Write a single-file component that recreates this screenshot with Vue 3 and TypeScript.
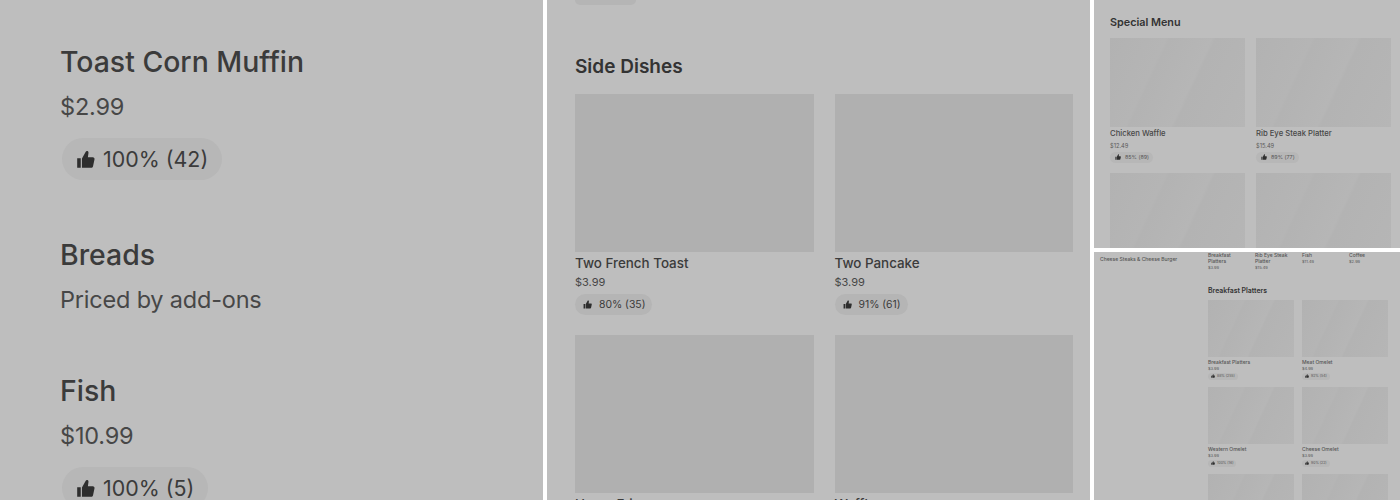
<script setup lang="ts">
interface Dish {
  name: string
  price: string
  rating?: string
}

const leftList: Dish[] = [
  { name: 'Toast Corn Muffin', price: '$2.99', rating: '100% (42)' },
  { name: 'Breads', price: 'Priced by add-ons' },
  { name: 'Fish', price: '$10.99', rating: '100% (5)' },
]

const sideDishes: Dish[] = [
  { name: 'Two French Toast', price: '$3.99', rating: '80% (35)' },
  { name: 'Two Pancake', price: '$3.99', rating: '91% (61)' },
  { name: 'Home Fries', price: '$3.99' },
  { name: 'Waffle', price: '$3.99' },
]

const specials: Dish[] = [
  { name: 'Chicken Waffle', price: '$12.49', rating: '85% (89)' },
  { name: 'Rib Eye Steak Platter', price: '$15.49', rating: '89% (77)' },
  { name: 'Fish Platter', price: '$11.49' },
  { name: 'Steak Platter', price: '$13.49' },
]

const topRow: Dish[] = [
  { name: 'Breakfast Platters', price: '$3.99' },
  { name: 'Rib Eye Steak Platter', price: '$15.49' },
  { name: 'Fish', price: '$11.49' },
  { name: 'Coffee', price: '$2.99' },
]

const platters: Dish[] = [
  { name: 'Breakfast Platters', price: '$3.99', rating: '88% (255)' },
  { name: 'Meat Omelet', price: '$4.99', rating: '92% (54)' },
  { name: 'Western Omelet', price: '$3.99', rating: '100% (16)' },
  { name: 'Cheese Omelet', price: '$3.99', rating: '90% (22)' },
  { name: 'Ham Omelet', price: '$3.99' },
  { name: 'Veggie Omelet', price: '$3.99' },
]

const thumbPath =
  'M1 7h3v8H1zM5 7.2 8.2 1.4c.3-.6 1-.8 1.5-.5.6.3.9.9.8 1.6L10 6h4.2c.9 0 1.6.9 1.4 1.8l-1.3 6c-.2.7-.8 1.2-1.5 1.2H5z'
</script>

<template>
  <div class="collage">
    <section class="panel panel-list">
      <div v-for="dish in leftList" :key="dish.name" class="list-item">
        <div class="name">{{ dish.name }}</div>
        <div class="price">{{ dish.price }}</div>
        <div v-if="dish.rating" class="chip">
          <svg viewBox="0 0 16 16"><path :d="thumbPath" /></svg>
          <span>{{ dish.rating }}</span>
        </div>
      </div>
    </section>

    <section class="panel panel-side">
      <div class="cut-chip"></div>
      <h2>Side Dishes</h2>
      <div class="grid">
        <article v-for="dish in sideDishes" :key="dish.name" class="card">
          <div class="photo"></div>
          <div class="name">{{ dish.name }}</div>
          <div class="price">{{ dish.price }}</div>
          <div v-if="dish.rating" class="chip">
            <svg viewBox="0 0 16 16"><path :d="thumbPath" /></svg>
            <span>{{ dish.rating }}</span>
          </div>
        </article>
      </div>
    </section>

    <div class="stack">
      <section class="panel panel-special">
        <h2>Special Menu</h2>
        <div class="grid">
          <article v-for="dish in specials" :key="dish.name" class="card">
            <div class="photo streak"></div>
            <div class="name">{{ dish.name }}</div>
            <div class="price">{{ dish.price }}</div>
            <div v-if="dish.rating" class="chip">
              <svg viewBox="0 0 16 16"><path :d="thumbPath" /></svg>
              <span>{{ dish.rating }}</span>
            </div>
          </article>
        </div>
      </section>

      <section class="panel panel-page">
        <aside class="sidebar">Cheese Steaks &amp; Cheese Burger</aside>
        <div class="page-main">
          <div class="top-row">
            <div v-for="dish in topRow" :key="dish.name" class="top-item">
              <div class="top-name">{{ dish.name }}</div>
              <div class="top-price">{{ dish.price }}</div>
            </div>
          </div>
          <h2>Breakfast Platters</h2>
          <div class="grid">
            <article v-for="dish in platters" :key="dish.name" class="card">
              <div class="photo streak"></div>
              <div class="name">{{ dish.name }}</div>
              <div class="price">{{ dish.price }}</div>
              <div v-if="dish.rating" class="chip">
                <svg viewBox="0 0 16 16"><path :d="thumbPath" /></svg>
                <span>{{ dish.rating }}</span>
              </div>
            </article>
          </div>
        </div>
      </section>
    </div>
  </div>
</template>

<style scoped>
.collage {
  display: grid;
  grid-template-columns: 543px 543px 306px;
  gap: 4px;
  width: 1400px;
  height: 500px;
  overflow: hidden;
  background: #fff;
  font-family: Inter, "Liberation Sans", sans-serif;
  color: #3b3b3b;
}

.stack {
  display: grid;
  grid-template-rows: 248px 248px;
  gap: 4px;
  height: 500px;
}

.panel {
  height: 100%;
  overflow: hidden;
  background: #bebebe;
  box-sizing: border-box;
}

h2 {
  margin: 0;
  font-weight: 600;
  color: #333;
}

.grid {
  display: grid;
  grid-template-columns: 1fr 1fr;
}

.photo {
  background: #b0b0b0;
}

.streak {
  background: linear-gradient(115deg, #b2b2b2 0%, #b5b5b5 32%, #b3b3b3 34%, #b6b6b6 58%, #b3b3b3 60%, #b6b6b6 100%);
}

.chip {
  display: flex;
  align-items: center;
  width: fit-content;
  background: #b5b5b5;
}

.chip svg {
  display: block;
  fill: #2e2e2e;
}

/* left: zoomed list */
.panel-list {
  padding: 44px 0 0 60px;
}

.list-item {
  height: 193px;
}

.list-item:nth-child(2) {
  height: 136px;
}

.panel-list .name {
  font-size: 28.4px;
  line-height: 36px;
  font-weight: 500;
}

.panel-list .price {
  font-size: 23.5px;
  line-height: 32px;
  margin-top: 11px;
  letter-spacing: -0.2px;
  color: #474747;
}

.panel-list .chip {
  margin: 15px 0 0 2px;
  height: 42px;
  padding: 0 14px;
  gap: 8px;
  border-radius: 21px;
  font-size: 21.4px;
  background: #b7b7b7;
}

.panel-list .chip svg {
  width: 19px;
  height: 19px;
}

/* middle: side dishes */
.panel-side {
  padding-left: 28px;
}

.cut-chip {
  width: 61px;
  height: 5px;
  background: #b5b5b5;
  border-radius: 0 0 10px 10px;
}

.panel-side h2 {
  margin-top: 49px;
  font-size: 19px;
  line-height: 26px;
}

.panel-side .grid {
  margin-top: 14px;
  width: 498px;
  column-gap: 21px;
  row-gap: 20px;
}

.panel-side .photo {
  height: 158px;
}

.panel-side .name {
  margin-top: 2px;
  font-size: 13.4px;
  line-height: 18px;
  font-weight: 500;
}

.panel-side .price {
  margin-top: 3px;
  font-size: 11px;
  line-height: 15px;
  color: #474747;
}

.panel-side .chip {
  margin-top: 4px;
  height: 21px;
  padding: 0 7px 0 8px;
  gap: 7px;
  border-radius: 11px;
  font-size: 10.4px;
}

.panel-side .chip svg {
  width: 9px;
  height: 9px;
}

/* top right: special menu */
.panel-special {
  padding-left: 16px;
}

.panel-special h2 {
  margin-top: 15px;
  font-size: 10.8px;
  line-height: 16px;
}

.panel-special .grid {
  margin-top: 7px;
  width: 281px;
  column-gap: 11px;
  row-gap: 10.5px;
}

.panel-special .photo {
  height: 89px;
}

.panel-special .name {
  margin-top: 1.5px;
  font-size: 7.7px;
  line-height: 10px;
  font-weight: 500;
  color: #474747;
}

.panel-special .price {
  margin-top: 2px;
  font-size: 5.7px;
  line-height: 9px;
  color: #5a5a5a;
}

.panel-special .chip {
  margin-top: 2px;
  height: 11px;
  padding: 0 4px 0 5px;
  gap: 4px;
  border-radius: 6px;
  font-size: 5.4px;
  color: #555;
  background: #b7b7b7;
}

.panel-special .chip svg {
  width: 6px;
  height: 6px;
}

/* bottom right: whole page */
.panel-page {
  display: flex;
  color: #555;
}

.sidebar {
  width: 114px;
  padding: 3px 0 0 6px;
  box-sizing: border-box;
  font-size: 5px;
  line-height: 8px;
  font-weight: 500;
}

.top-row {
  display: grid;
  grid-template-columns: repeat(4, 47px);
}

.top-item {
  width: 36px;
}

.top-name {
  font-size: 5px;
  line-height: 6px;
  font-weight: 500;
}

.top-price {
  margin-top: 1px;
  font-size: 4px;
  line-height: 6px;
}

.panel-page h2 {
  margin-top: 15px;
  font-size: 6.9px;
  line-height: 9px;
}

.panel-page .grid {
  margin-top: 5px;
  width: 180px;
  column-gap: 8px;
  row-gap: 7.5px;
}

.panel-page .photo {
  height: 57px;
}

.panel-page .name {
  margin-top: 1.5px;
  font-size: 5px;
  line-height: 6px;
  font-weight: 500;
}

.panel-page .price {
  margin-top: 1px;
  font-size: 4px;
  line-height: 6px;
}

.panel-page .chip {
  margin-top: 1px;
  height: 7px;
  padding: 0 3px;
  gap: 2px;
  border-radius: 4px;
  font-size: 3.5px;
  background: #b7b7b7;
}

.panel-page .chip svg {
  width: 4px;
  height: 4px;
}
</style>
